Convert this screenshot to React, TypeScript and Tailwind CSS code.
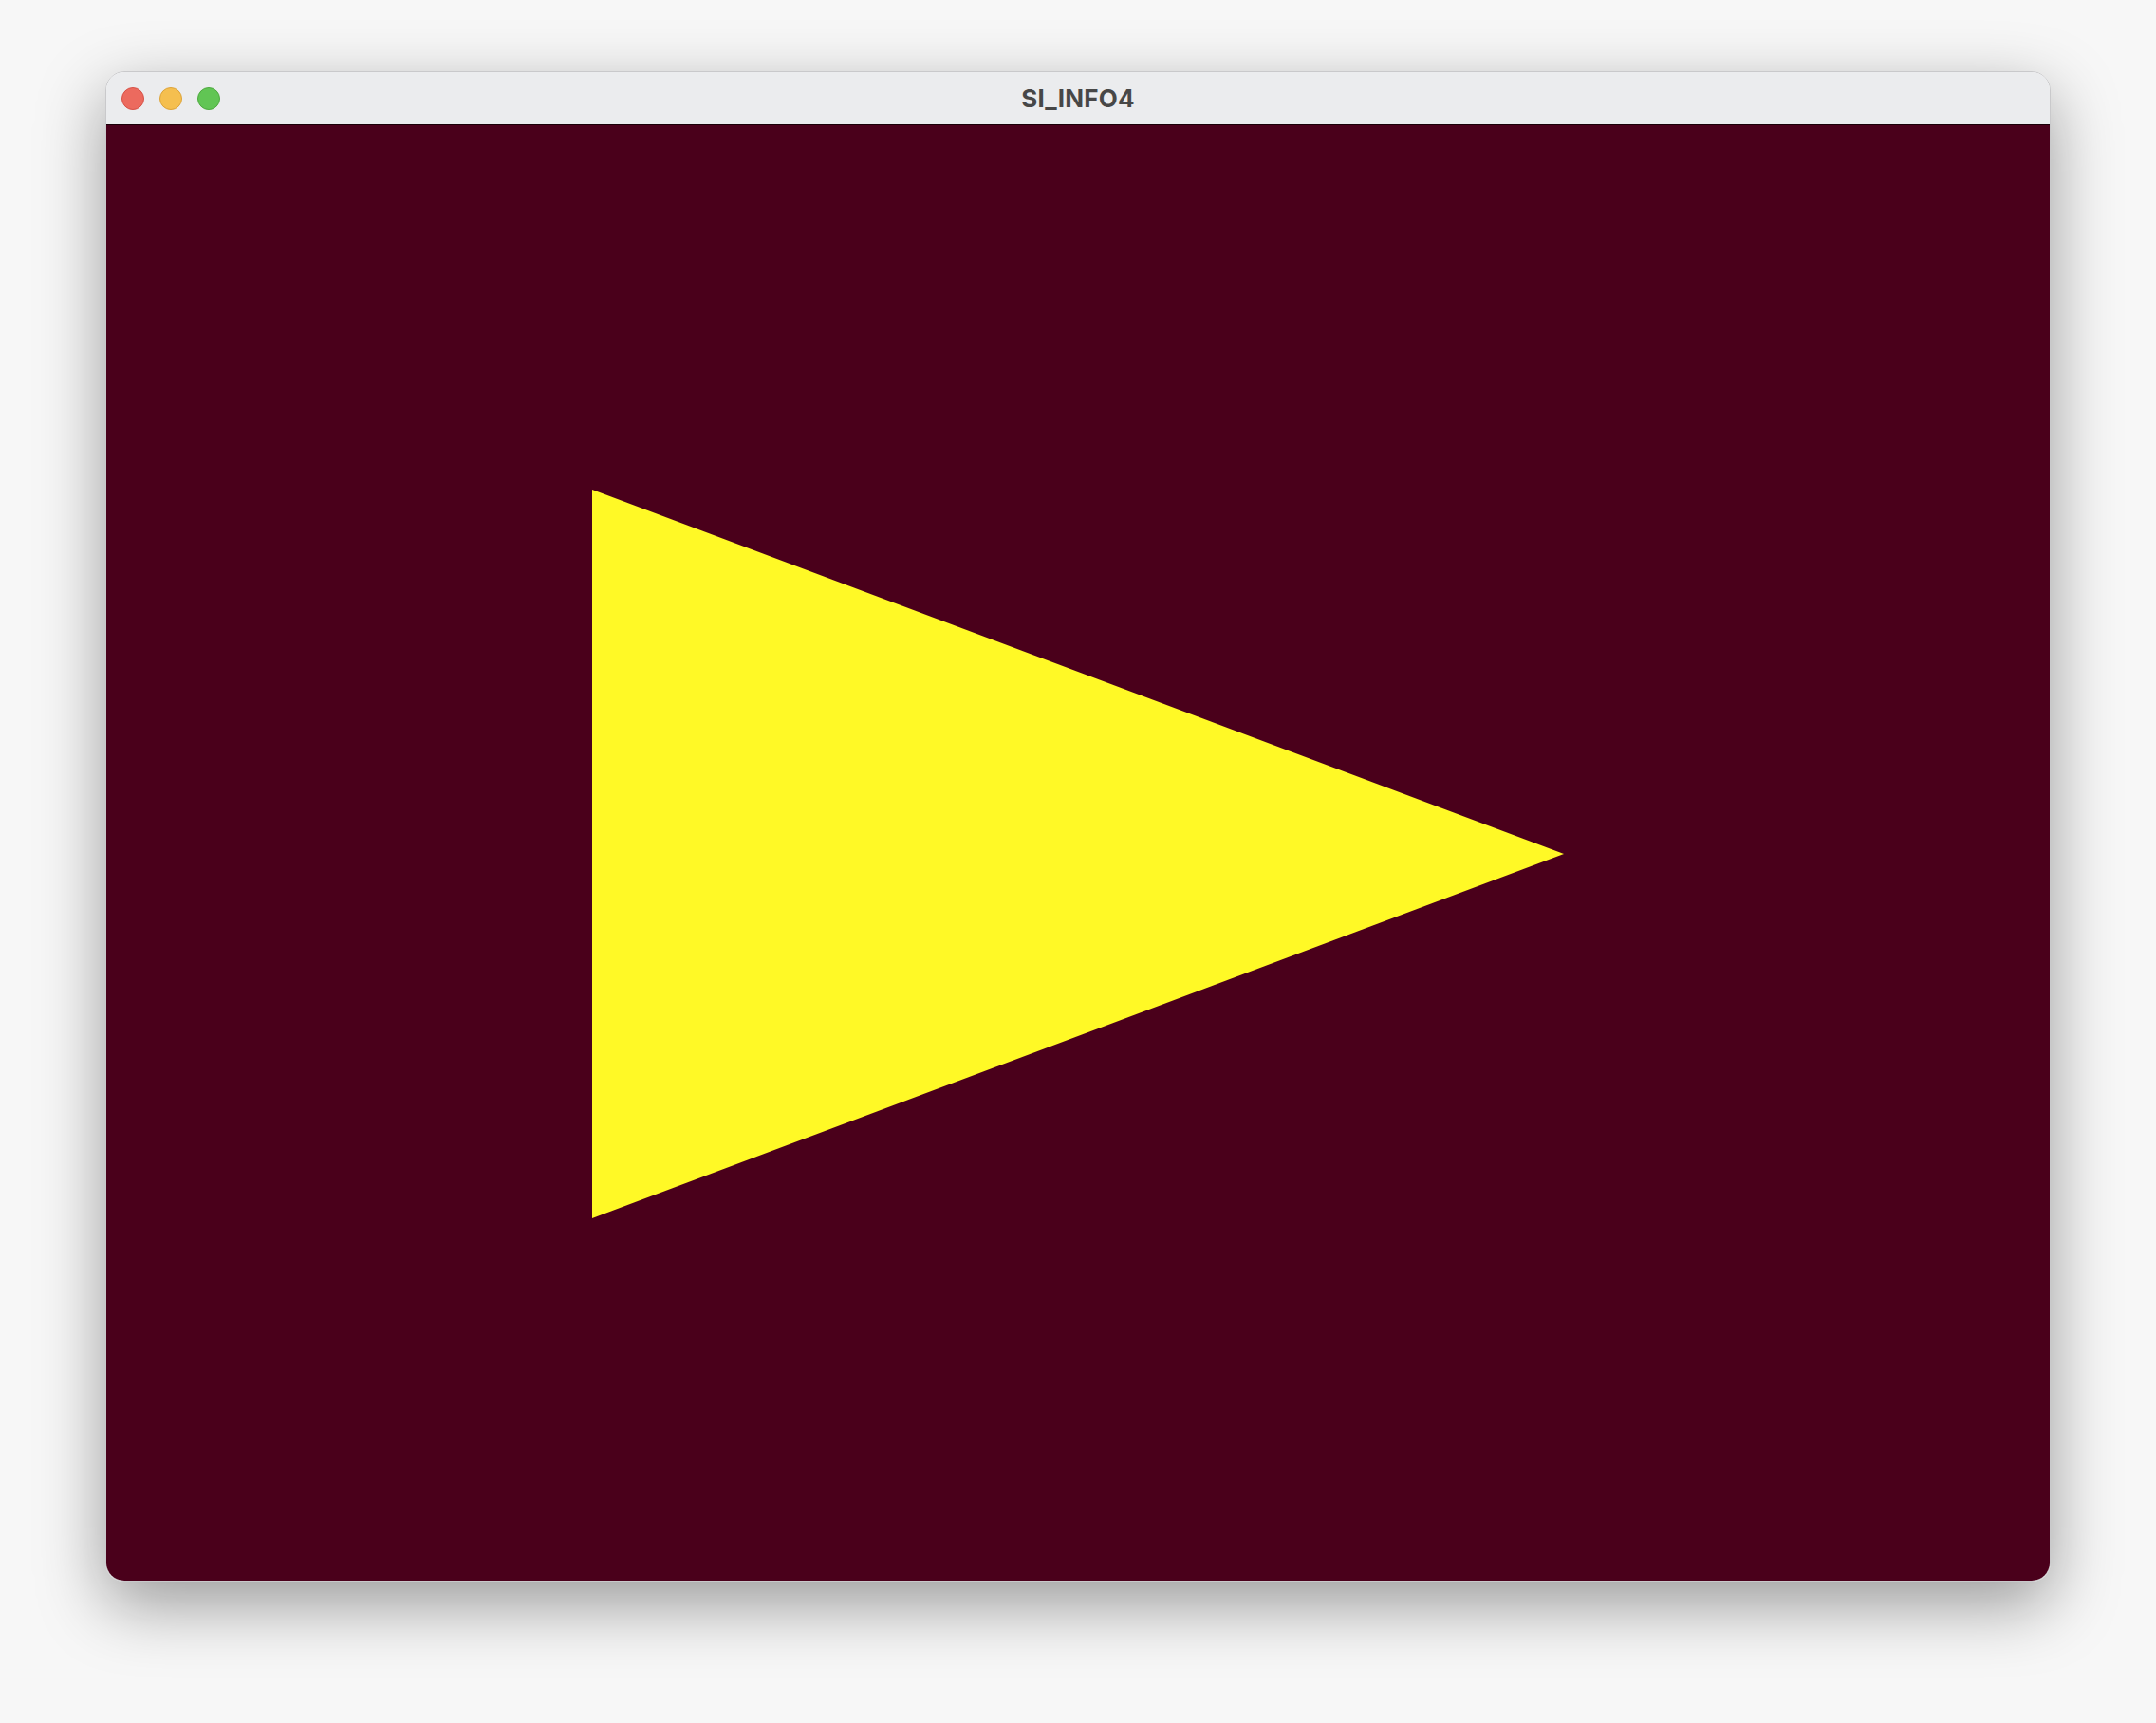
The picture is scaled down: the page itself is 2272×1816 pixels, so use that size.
import React from 'react'

function TrafficLights() {
  return (
    <div className="flex items-center gap-4 pl-[16px]">
      <span className="w-6 h-6 rounded-full bg-[#ec6a5e] border border-[#d65248]" />
      <span className="w-6 h-6 rounded-full bg-[#f5bf4f] border border-[#dca33a]" />
      <span className="w-6 h-6 rounded-full bg-[#61c554] border border-[#4ea93f]" />
    </div>
  )
}

export default function App() {
  return (
    <div className="w-[2272px] h-[1816px] bg-[#f7f7f7] pt-[75px] font-['Inter','Liberation_Sans',sans-serif]">
      <div className="mx-auto w-[2050px] rounded-[20px] overflow-hidden border border-[#c9c9cb] shadow-[0_24px_70px_rgba(0,0,0,0.38)]">
        {/* Title bar */}
        <div className="relative h-[56px] bg-[#ebecee] border-b border-[#1a0008] flex items-center">
          <TrafficLights />
          <div className="absolute inset-0 flex items-center justify-center text-[26px] font-bold text-[#474747] tracking-[0.2px]">
            SI_INFO4
          </div>
        </div>

        {/* Content */}
        <div className="h-[1534px] bg-[#4a001b]">
          <svg width="2048" height="1534" viewBox="0 0 2048 1534" className="block">
            <polygon points="512,384 1536,768 512,1152" fill="#fff926" />
          </svg>
        </div>
      </div>
    </div>
  )
}
